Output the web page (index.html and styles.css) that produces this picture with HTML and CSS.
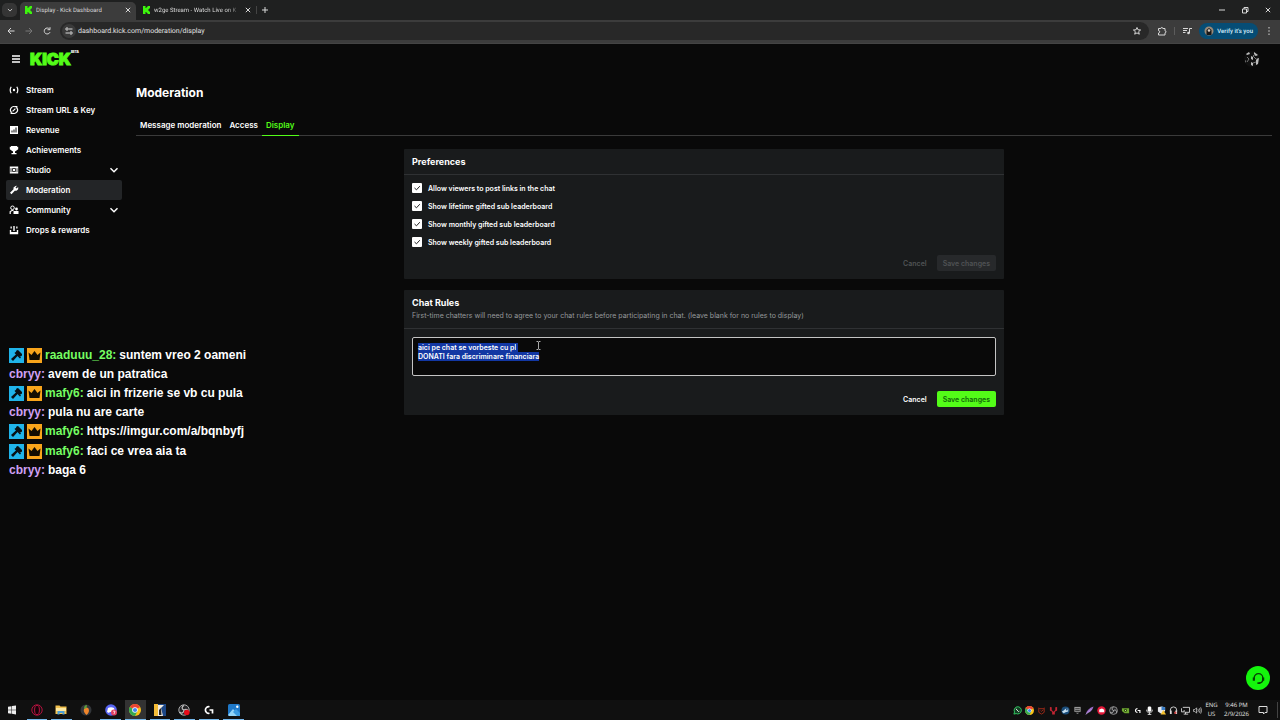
FILE: index.html
```html
<!DOCTYPE html>
<html lang="en">
<head>
    <meta charset="UTF-8">
    <meta name="viewport" content="width=device-width, initial-scale=1.0">
    <title>Display - Kick Dashboard</title>
    <link rel="stylesheet" href="styles.css">
</head>
<body>
    <svg class="sprite" aria-hidden="true">
        <symbol id="close" viewBox="0 0 8 8"><path d="M1.8 1.8l4.400 4.400m0-4.400l-4.400 4.400" fill="none" stroke="currentColor"/></symbol>
        <symbol id="chevron" viewBox="0 0 10 10"><path d="M1.500 3.2L5 6.8l3.500-3.600" fill="none" stroke="currentColor" stroke-width="1.400"/></symbol>
        <symbol id="kick-icon" viewBox="0 0 8 8"><path d="M1 0h2.500v2h1V1h1V0H8v2.500H7v1H6v1h1v1h1V8H5.500V7h-1V6h-1v2H1z" fill="#3df50d"/></symbol>
        <symbol id="hammer" viewBox="0 0 15 15"><path d="M0 0h15v15H0z" fill="#20b4ea"/><path d="M7.500 2.500l1.500-.5 4 4v1.500l-1.500 1-1.500-.5-1-.5L4 13 2 11l5.500-5-.8-1.500z" fill="#081014"/><path d="M6 4.500l5.500 5.500" stroke="#081014" stroke-width="1.500"/></symbol>
        <symbol id="crown" viewBox="0 0 15 15"><path d="M0 0h15v15H0z" fill="#f9a51b"/><path d="M1.500 4.500l3 2.500 3-4 3 4 3-2.500-1 7.500h-10z" fill="#130d02"/></symbol>
        <symbol id="chrome" viewBox="0 0 12 12"><circle cx="6" cy="6" r="6" fill="#fbc116"/><path d="M6 6L.8 3A6 6 0 0 1 11.200 3z" fill="#ea4335"/><path d="M6 6L.8 3A6 6 0 0 0 6 12l2.500-5z" fill="#34a853"/><circle cx="6" cy="6" r="2.800" fill="#fff"/><circle cx="6" cy="6" r="2.100" fill="#4285f4"/></symbol>
        <symbol id="obs" viewBox="0 0 12 12"><circle cx="6" cy="6" r="5.200" fill="#242426" stroke="#aaa"/><path d="M6 6C3 5 4 2 6 1.500M6 6c3-2 5 1 4 3M6 6c0 3-3 4-4.500 2" fill="none" stroke="#bbb" stroke-width="1.300"/></symbol>
    </svg>

    <div class="tab-strip">
        <button class="tab-search" aria-label="Search tabs"><svg class="icon-xs"><use href="#chevron"/></svg></button>
        <div class="browser-tab active">
            <svg class="favicon"><use href="#kick-icon"/></svg>
            <span class="tab-title">Display - Kick Dashboard</span>
            <button aria-label="Close tab"><svg class="icon-s"><use href="#close"/></svg></button>
        </div>
        <div class="browser-tab">
            <svg class="favicon"><use href="#kick-icon"/></svg>
            <span class="tab-title faded">w2ge Stream - Watch Live on K</span>
            <button aria-label="Close tab"><svg class="icon-s"><use href="#close"/></svg></button>
        </div>
        <button class="new-tab" aria-label="New tab"><svg class="icon-s" viewBox="0 0 8 8"><path d="M4 1v6M1 4h6" stroke="currentColor"/></svg></button>
        <div class="window-buttons">
            <button aria-label="Minimize"><svg class="icon-s" viewBox="0 0 8 8"><path d="M1 4h6" stroke="currentColor"/></svg></button>
            <button aria-label="Restore"><svg class="icon-s" viewBox="0 0 8 8"><path d="M1.500 3h4v4h-4zM3 3V1.500h4V5.500H5.500" fill="none" stroke="currentColor"/></svg></button>
            <button aria-label="Close"><svg class="icon-s"><use href="#close"/></svg></button>
        </div>
    </div>

    <div class="toolbar">
        <button aria-label="Back"><svg class="icon-m" viewBox="0 0 10 10"><path d="M8.500 5H2m3-3L2 5l3 3" fill="none" stroke="currentColor"/></svg></button>
        <button class="dim" aria-label="Forward"><svg class="icon-m" viewBox="0 0 10 10"><path d="M1.500 5H8M5 2l3 3-3 3" fill="none" stroke="currentColor"/></svg></button>
        <button aria-label="Reload"><svg class="icon-m" viewBox="0 0 10 10"><path d="M8 6.200A3 3 0 1 1 7.500 3M8 1.200v2.500H5.500" fill="none" stroke="currentColor"/></svg></button>
        <div class="address">
            <span class="site-info"><svg class="icon-s" viewBox="0 0 8 8"><path d="M4 2h3.500M.5 6H4" stroke="currentColor"/><circle cx="2" cy="2" r="1.200" fill="none" stroke="currentColor"/><circle cx="6" cy="6" r="1.200" fill="none" stroke="currentColor"/></svg></span>
            <input type="text" aria-label="Address" value="dashboard.kick.com/moderation/display">
            <button aria-label="Bookmark"><svg class="icon-m" viewBox="0 0 10 10"><path d="M5 1.500l1 2.300 2.600.2-2 1.700.7 2.500L5 6.900 2.700 8.200l.7-2.500L1.400 4 4 3.800z" fill="none" stroke="currentColor"/></svg></button>
        </div>
        <div class="toolbar-end">
            <button aria-label="Extensions"><svg class="icon-m" viewBox="0 0 10 10"><path d="M1.500 2.500h2.300a1 1 0 0 1 2 0H8v2.300a1 1 0 0 1 0 2V9H1.500V7a1.200 1.200 0 0 0 0-2.400z" fill="none" stroke="currentColor"/></svg></button>
            <span class="bar"></span>
            <button aria-label="Media"><svg class="icon-m" viewBox="0 0 10 10"><path d="M1 2.500h5M1 4.500h4M1 6.500h2.500M7.500 7V2.500H10" fill="none" stroke="currentColor"/><circle cx="6.500" cy="7" r="1.300" fill="currentColor"/></svg></button>
            <button class="verify"><svg class="icon-m" viewBox="0 0 10 10"><circle cx="5" cy="5" r="4.500" fill="#9a8a78"/><path d="M2.500 9V4L5 2l2.500 2v5z" fill="#181818"/><circle cx="5" cy="4.500" r="1.300" fill="#d9d0c7"/></svg>Verify it's you</button>
            <button aria-label="Menu"><svg class="icon-m" viewBox="0 0 10 10"><path d="M4.500 1h1v1.500h-1zM4.500 4.300h1v1.500h-1zM4.500 7.600h1v1.500h-1z" fill="currentColor"/></svg></button>
        </div>
    </div>

    <div class="page">
        <header class="site-header">
            <button aria-label="Toggle menu"><svg class="icon-s" viewBox="0 0 8 8"><path d="M0 1h8M0 4h8M0 7h8" stroke="currentColor" stroke-width="1.300"/></svg></button>
            <a href="#home" class="logo">KICK<sup>BETA</sup></a>
            <svg class="avatar" viewBox="0 0 16 16"><circle cx="8" cy="8" r="8" fill="#101010"/><path d="M2 3l3-2 1 2-3 1zM10 1l4 3-2 1-2-1zM7 5l2 1v3l-2-1zM12 8l3-1-1 6-2 1zM7 11l2 1v3l-2-1zM1 9l1 1v2z" fill="#bcbcbc"/><path d="M3 6l2 2-2 3M11 3l-2 2 4 4M9 12l3-1" fill="none" stroke="#777"/></svg>
        </header>

        <div class="layout">
            <nav class="sidebar">
                <a href="#stream"><svg class="nav-icon" viewBox="0 0 10 10"><circle cx="5" cy="5" r="1.200" fill="currentColor"/><path d="M2.200 1.800Q.2 5 2.200 8.200M7.800 1.800q2 3.200 0 6.400" fill="none" stroke="currentColor" stroke-width="1.200"/></svg>Stream</a>
                <a href="#key"><svg class="nav-icon" viewBox="0 0 10 10"><path d="M6 1.700A3.500 3.500 0 0 0 2.200 7.200M4 8.300A3.500 3.500 0 0 0 7.800 2.800M3.600 6.400l2.800-2.800M6 1.700h1.800v1.800M4 8.300H2.200V6.500" fill="none" stroke="currentColor" stroke-width="1.200"/></svg>Stream URL &amp; Key</a>
                <a href="#revenue"><svg class="nav-icon" viewBox="0 0 10 10"><path d="M1 1h8v8H1z" fill="currentColor"/><path d="M3 7.500V5.500M5 7.500v-3M7 7.500v-5" stroke="#0b0b0b"/></svg>Revenue</a>
                <a href="#achievements"><svg class="nav-icon" viewBox="0 0 10 10"><path d="M2 1h6v.8h1.200v2.400L7.500 5.500 6 6.500V8h1.500v1.200h-5V8H4V6.500L2.500 5.500.8 4.200V1.800H2z" fill="currentColor"/></svg>Achievements</a>
                <a href="#studio"><svg class="nav-icon" viewBox="0 0 10 10"><path d="M.8 1.500h8.400v7H.8z" fill="currentColor"/><path d="M2 3.200v4M8 3.200v4M3.500 3.500h3v3h-3z" fill="none" stroke="#0b0b0b" stroke-width=".8"/></svg>Studio<svg class="expand"><use href="#chevron"/></svg></a>
                <a href="#moderation" class="active"><svg class="nav-icon" viewBox="0 0 10 10"><path d="M6.500 1L8 .8 6.500 2.500 7.500 3.500 9.200 2v2.200L7.500 5.800H5.800L2.500 9.200 1 7.800l3.500-3.500V2.600z" fill="currentColor"/></svg>Moderation</a>
                <a href="#community"><svg class="nav-icon" viewBox="0 0 10 10"><circle cx="3.500" cy="2.800" r="1.800" fill="none" stroke="currentColor"/><path d="M1.200 9V6.500L3 5.500h1.500" fill="none" stroke="currentColor" stroke-width="1.200"/><circle cx="7.500" cy="4" r="1.400" fill="currentColor"/><path d="M4.500 6h5v3h-5z" fill="currentColor"/></svg>Community<svg class="expand"><use href="#chevron"/></svg></a>
                <a href="#drops"><svg class="nav-icon" viewBox="0 0 10 10"><path d="M.8 5h1.400v2h5.600V5h1.400v4.200H.8zM4.300 1h1.400v5H4.300zM1.500 1.500h1.300v2H1.500zM7.200 1.500h1.300v2H7.200z" fill="currentColor"/></svg>Drops &amp; rewards</a>
            </nav>

            <main class="content">
                <h1>Moderation</h1>
                <div class="tabs">
                    <a href="#message">Message moderation</a>
                    <a href="#access">Access</a>
                    <a href="#display" class="active">Display</a>
                </div>

                <section class="card">
                    <div class="card-header">
                        <h2>Preferences</h2>
                    </div>
                    <form class="card-body">
                        <label><input type="checkbox" checked>Allow viewers to post links in the chat</label>
                        <label><input type="checkbox" checked>Show lifetime gifted sub leaderboard</label>
                        <label><input type="checkbox" checked>Show monthly gifted sub leaderboard</label>
                        <label><input type="checkbox" checked>Show weekly gifted sub leaderboard</label>
                        <div class="actions">
                            <button type="button" class="btn" disabled>Cancel</button>
                            <button type="submit" class="btn save" disabled>Save changes</button>
                        </div>
                    </form>
                </section>

                <section class="card">
                    <div class="card-header">
                        <h2>Chat Rules</h2>
                        <p>First-time chatters will need to agree to your chat rules before participating in chat. (leave blank for no rules to display)</p>
                    </div>
                    <form class="card-body rules-body">
                        <textarea id="rules" aria-label="Chat Rules" spellcheck="false">aici pe chat se vorbeste cu pl
DONATI fara discriminare financiara</textarea>
                        <svg class="cursor" viewBox="0 0 5 9"><path d="M.5.5h1.500l.5.500.5-.500h1.500M2.500 1v7M.5 8.500h1.500l.5-.500.5.500h1.500" fill="none" stroke="#d0d0d0" stroke-width=".8"/></svg>
                        <div class="actions">
                            <button type="button" class="btn">Cancel</button>
                            <button type="submit" class="btn save">Save changes</button>
                        </div>
                    </form>
                </section>
            </main>
        </div>

        <div class="chat">
            <p class="badged"><svg><use href="#hammer"/></svg><svg><use href="#crown"/></svg><b class="green">raaduuu_28:</b> suntem vreo 2 oameni</p>
            <p><b class="purple">cbryy:</b> avem de un patratica</p>
            <p class="badged"><svg><use href="#hammer"/></svg><svg><use href="#crown"/></svg><b class="green">mafy6:</b> aici in frizerie se vb cu pula</p>
            <p><b class="purple">cbryy:</b> pula nu are carte</p>
            <p class="badged"><svg><use href="#hammer"/></svg><svg><use href="#crown"/></svg><b class="green">mafy6:</b> https://imgur.com/a/bqnbyfj</p>
            <p class="badged"><svg><use href="#hammer"/></svg><svg><use href="#crown"/></svg><b class="green">mafy6:</b> faci ce vrea aia ta</p>
            <p><b class="purple">cbryy:</b> baga 6</p>
        </div>

        <button class="help" aria-label="Support"><svg viewBox="0 0 12 12"><path d="M2 7V5.500a4 4 0 0 1 8 0V7.500Q9.500 10 6.500 10.300" fill="none" stroke="#073d06" stroke-width="1.200"/><path d="M.7 5h2v3h-2zM9.300 5h2v3h-2zM5 9.500h2.500V11H5z" fill="#073d06"/></svg></button>
    </div>

    <footer class="taskbar">
        <div class="apps">
            <button aria-label="Start"><svg viewBox="0 0 12 12"><path d="M2 2.700l3.500-.5v3.500H2zM6 2.100l4-.6v4.200H6zM2 6.200h3.500v3.500L2 9.200zM6 6.200h4v4.200l-4-.6z" fill="#eee"/></svg></button>
            <button class="open" aria-label="Opera GX"><svg viewBox="0 0 12 12"><circle cx="6" cy="6" r="5.200" fill="none" stroke="#b5123f"/><ellipse cx="6" cy="6" rx="2.400" ry="4.600" fill="#160309" stroke="#b5123f"/></svg></button>
            <button class="open" aria-label="File Explorer"><svg viewBox="0 0 12 12"><path d="M.5 1.500h4l1 1h6V10H.5z" fill="#f2c14e"/><path d="M1 4h10v3H1z" fill="#fde9a2"/><path d="M2.500 10.500V7h7v3.500h-2V9h-3v1.500z" fill="#4b9fd8"/></svg></button>
            <button aria-label="FL Studio"><svg viewBox="0 0 12 12"><circle cx="6" cy="6" r="5.500" fill="#33363a"/><path d="M4 5Q6 2.500 8.500 4.500 10 8 6.500 11 3 8 4 5z" fill="#f1862b"/><path d="M4 5Q4 1 7 1L6.500 4z" fill="#5fa13a"/></svg></button>
            <button class="open" aria-label="Discord"><svg viewBox="0 0 12 12"><circle cx="6" cy="6" r="5.800" fill="#5865f2"/><path d="M3 4q3-1.500 6 0l1 4-2 1-.8-1H4.800L4 9 2 8z" fill="#fff"/><circle cx="9" cy="8.500" r="3" fill="#e04060"/><path d="M8 7.200h2L9 10" fill="none" stroke="#fff" stroke-width=".7"/></svg></button>
            <button class="open current" aria-label="Chrome"><svg><use href="#chrome"/></svg></button>
            <button class="open" aria-label="Game"><svg viewBox="0 0 12 12"><path d="M0 0h12v12H0z" fill="#1c4787"/><path d="M0 0h4v12H0z" fill="#f5bd38"/><path d="M4 1h6L7 4l2 8H4z" fill="#f5eee3"/><path d="M5 6l2-2 .5 7H5z" fill="#272524"/></svg></button>
            <button class="open" aria-label="OBS Studio"><svg viewBox="0 0 12 12"><use href="#obs"/><circle cx="8.800" cy="8.500" r="2.800" fill="#e80a18"/></svg></button>
            <button class="open" aria-label="Logitech G HUB"><svg viewBox="0 0 12 12"><path d="M6.500 2.800A3.300 3.300 0 1 0 6.500 9.200M6.500 6h3v3.500" fill="none" stroke="#fff" stroke-width="1.700"/></svg></button>
            <button class="open" aria-label="Photos"><svg viewBox="0 0 12 12"><rect width="12" height="12" rx="1.500" fill="#1f78c8"/><path d="M0 11l5-6 6.500 7H1z" fill="#93d4f7"/><path d="M5 8l3-3 4 4v3H9z" fill="#3b9ce2"/><circle cx="9.300" cy="2.800" r="1.200" fill="#fff"/></svg></button>
        </div>

        <div class="tray">
            <svg viewBox="0 0 10 10"><path d="M1 9l.7-2.400a4 4 0 1 1 1.800 1.800z" fill="#123d22" stroke="#35d366"/><path d="M3.400 3l1 1.500 1.800 1.700L7 5.800" fill="none" stroke="#fff"/></svg>
            <svg><use href="#chrome"/></svg>
            <svg viewBox="0 0 10 10"><path d="M2 2l1 1h4l1-1v5L5 9 2 7z" fill="none" stroke="#a62b1a"/><path d="M4 5l1 1 2-2" fill="none" stroke="#a62b1a"/></svg>
            <svg viewBox="0 0 10 10"><path d="M1 1l2 .5v3l2 2 2-2v-3L9 1v4L6.500 6.500v3h-3v-3L1 5z" fill="#c32532"/></svg>
            <svg viewBox="0 0 10 10"><circle cx="5" cy="5" r="4.500" fill="#1a4c79"/><path d="M1 6l2-1 2-2h3v3L5 7 3 8z" fill="#c3dcee"/><circle cx="6.500" cy="4" r="1" fill="#1a4c79"/></svg>
            <svg viewBox="0 0 10 10"><path d="M1.500 1h7v5.500h-7z" fill="#999"/><path d="M2.500 3h5M2.500 5h5" stroke="#333"/><path d="M3 7.500h4L5 9z" fill="#888"/></svg>
            <svg viewBox="0 0 10 10"><path d="M.8 9.500Q2 3 9.500.5 8 6 3.500 7.500z" fill="#9a6bc8"/><path d="M1 9.500l6-6" stroke="#d5c1ea" stroke-width=".6"/></svg>
            <svg viewBox="0 0 10 10"><circle cx="5" cy="5" r="4.700" fill="#e41839"/><path d="M2.500 4l3-1.300 2.500 1.500V7H2.500z" fill="#fff"/></svg>
            <svg><use href="#obs"/></svg>
            <svg viewBox="0 0 10 10"><path d="M1 2.500h8v5.500H4L1 5.500z" fill="#6fa832"/><circle cx="5" cy="5" r="1.600" fill="#203a08"/><circle cx="5" cy="5" r=".7" fill="#b9dc83"/></svg>
            <svg viewBox="0 0 10 10"><path d="M5 2.800A2.200 2.200 0 1 0 5 7.200M5.200 5h2.500v2.700" fill="none" stroke="#fff" stroke-width="1.300"/></svg>
            <svg viewBox="0 0 10 10"><rect x="3" y=".5" width="4" height="6" rx="1.500" fill="#fff"/><path d="M2 4v2l2 1.500h2L8 6V4M5 7v2.500M3 9.500h4" fill="none" stroke="#ddd"/></svg>
            <svg viewBox="0 0 10 10"><path d="M1 1.500L5 .5l4 1v4L5 9 1 6z" fill="#e7e9ed"/><path d="M5 .5l4 1v3H5z" fill="#3b7ec6"/><path d="M7 4.500l3 5H4z" fill="#f7c331"/></svg>
            <svg viewBox="0 0 10 10"><path d="M1.500 6V4.500a3.500 3.500 0 0 1 7 0V6" fill="none" stroke="#ddd"/><path d="M1 5h2v4H1zM7 5h2v4H7z" fill="#ddd"/><circle cx="7" cy="7.500" r="1.300" fill="#d34747"/></svg>
            <svg viewBox="0 0 10 10"><path d="M2 1.500h7.500V7H4M.5 2.500v4h3v-2M5 7v2M3 9h5" fill="none" stroke="#ddd"/></svg>
            <svg viewBox="0 0 10 10"><path d="M.5 4h1.500l2-2v6l-2-2H.5zM5.500 3.500q1 1.500 0 3M7 2.500q1.600 2.500 0 5M8.500 1.500q2 3.500 0 7" fill="none" stroke="#ddd" stroke-width=".8"/></svg>
        </div>
        <div class="lang">ENG<br>US</div>
        <div class="clock">9:46 PM<br>2/9/2026</div>
        <button class="notifications" aria-label="Notifications"><svg viewBox="0 0 10 10"><path d="M1 1.500h8v6H7L5.500 9V7.500H1z" fill="none" stroke="#ddd"/></svg></button>
    </footer>

    <script>
        var rules = document.getElementById('rules');
        rules.focus();
        rules.select();
    </script>
</body>
</html>
```
FILE: styles.css
```css
* {
    box-sizing: border-box;
}
body {
    margin: 0;
    height: 100vh;
    display: flex;
    flex-direction: column;
    overflow: hidden;
    background-color: #090909;
    color: #fff;
    font-family: Inter, sans-serif;
    font-size: 8px;
}
button {
    display: flex;
    align-items: center;
    justify-content: center;
    margin: 0;
    padding: 0;
    border: none;
    background: none;
    color: inherit;
    font: inherit;
}
a {
    color: inherit;
    text-decoration: none;
}
svg {
    flex-shrink: 0;
}
.sprite {
    display: none;
}
.icon-xs {
    width: 6px;
    height: 6px;
}
.icon-s, .favicon {
    width: 8px;
    height: 8px;
}
.icon-m {
    width: 10px;
    height: 10px;
}

/* browser window */
.tab-strip, .toolbar {
    font-family: Roboto, sans-serif;
    text-rendering: geometricPrecision;
}
.tab-strip {
    display: flex;
    align-items: center;
    height: 20px;
    flex-shrink: 0;
    background-color: #1f2020;
    font-size: 6px;
    color: #d8d8d8;
}
.tab-search {
    width: 15px;
    height: 14px;
    margin: 0 3px 0 2px;
    border-radius: 5px;
    background-color: #353535;
}
.browser-tab {
    display: flex;
    align-items: center;
    gap: 4px;
    width: 116px;
    height: 18px;
    align-self: flex-end;
    padding: 0 4px 2px;
    border-radius: 5px 5px 0 0;
}
.browser-tab.active {
    background-color: #3c3c3c;
}
.browser-tab + .browser-tab {
    width: 120px;
    padding-left: 6px;
}
.tab-title {
    flex: 1;
    overflow: hidden;
    white-space: nowrap;
}
.faded {
    -webkit-mask-image: linear-gradient(to right, #000 85%, transparent);
    mask-image: linear-gradient(to right, #000 85%, transparent);
}
.new-tab {
    padding-left: 4px;
    border-left: 1px solid #444;
}
.window-buttons {
    display: flex;
    gap: 15px;
    margin-left: auto;
    padding-right: 8px;
}
.toolbar {
    display: flex;
    align-items: center;
    gap: 8px;
    height: 24px;
    flex-shrink: 0;
    padding: 0 6px 1px;
    background-color: #3c3c3c;
    border-bottom: 1px solid #444;
    color: #d8d8d8;
    font-size: 7px;
}
.toolbar-end {
    display: flex;
    align-items: center;
    gap: 7px;
}
.dim {
    color: #777;
}
.address {
    flex: 1;
    display: flex;
    align-items: center;
    height: 18px;
    padding: 0 7px 0 2px;
    border-radius: 9px;
    background-color: #282828;
}
.address input {
    flex: 1;
    padding: 0 2px;
    border: none;
    background: none;
    color: #e2e2e2;
    font: inherit;
    text-rendering: inherit;
}
.site-info {
    display: flex;
    padding: 3px;
    border-radius: 50%;
    background-color: #3a3a3a;
}
.bar {
    width: 1px;
    height: 8px;
    background-color: #5c5c5c;
}
.verify {
    gap: 3px;
    height: 16px;
    padding: 0 5px;
    border-radius: 8px;
    background-color: #064d75;
    color: #d5efff;
    font-size: 6px;
    font-weight: 500;
    text-rendering: inherit;
}
.toolbar-end button:last-child {
    margin-left: -1px;
}

/* dashboard */
.page {
    flex: 1;
    min-height: 0;
    position: relative;
    background-color: #090909;
}
.site-header {
    display: flex;
    align-items: center;
    height: 30px;
    padding: 0 20px 0 12px;
}
.logo {
    margin-left: 10px;
    color: #53fc18;
    font-size: 16px;
    font-weight: 900;
    line-height: 16px;
    -webkit-text-stroke: 1px #53fc18;
}
.logo sup {
    color: #fff;
    font-size: 3px;
    line-height: 3px;
    vertical-align: top;
    -webkit-text-stroke: 0;
}
.avatar {
    width: 16px;
    height: 16px;
    margin-left: auto;
}
.layout {
    display: flex;
}
.sidebar {
    width: 128px;
    padding: 6px;
}
.sidebar a {
    display: flex;
    align-items: center;
    gap: 7px;
    height: 20px;
    padding: 0 3px;
    border-radius: 2px;
    font-weight: 600;
}
.sidebar .active {
    background-color: #232527;
}
.nav-icon {
    width: 10px;
    height: 10px;
}
.expand {
    width: 10px;
    height: 10px;
    margin-left: auto;
}
.content {
    flex: 1;
    padding: 11px 8px;
}
h1 {
    margin: 0 0 16px;
    font-size: 12px;
    line-height: 16px;
    font-weight: 700;
}
.tabs {
    display: flex;
    margin-bottom: 13px;
    border-bottom: 1px solid #3a3a3a;
    font-weight: 600;
}
.tabs a {
    height: 19px;
    padding: 0 4px;
    line-height: 16px;
    margin-bottom: -1px;
}
.tabs .active {
    color: #53fc18;
    border-bottom: 1px solid #53fc18;
}
.card {
    max-width: 600px;
    margin: 0 auto 11px;
    background-color: #191b1c;
    border-radius: 1px;
}
.card-header {
    padding: 6px 8px;
    border-bottom: 1px solid #2f3133;
}
h2 {
    margin: 0;
    font-size: 9px;
    line-height: 13px;
    font-weight: 700;
}
.card-header p {
    margin: 2px 0;
    color: #96999b;
    font-size: 7px;
    line-height: 9px;
}
.card-body {
    display: flex;
    flex-direction: column;
    gap: 8px;
    padding: 8px;
}
.card-body label {
    display: flex;
    align-items: center;
    gap: 6px;
    height: 10px;
    font-size: 7px;
    font-weight: 600;
}
.card-body input {
    width: 10px;
    height: 10px;
    margin: 0;
    appearance: none;
    background-color: #fff;
    border-radius: 1px;
}
.card-body input:checked {
    background-image: url("data:image/svg+xml,%3Csvg xmlns='http://www.w3.org/2000/svg' viewBox='0 0 10 10'%3E%3Cpath d='M2.500 5l2 1.800 3.300-3.600' fill='none' stroke='%23222'/%3E%3C/svg%3E");
}
.actions {
    display: flex;
    justify-content: flex-end;
    gap: 4px;
}
.btn {
    height: 16px;
    padding: 0 6px;
    border-radius: 2px;
    font-size: 7px;
    font-weight: 600;
}
.btn:disabled {
    color: #505355;
}
.save {
    background-color: #53fc18;
    color: #11660a;
}
.save:disabled {
    background-color: #27292b;
}
.rules-body {
    position: relative;
    gap: 15px;
}
textarea {
    display: block;
    width: 100%;
    height: 39px;
    padding: 5px;
    border: 1px solid #c4c4c4;
    border-radius: 2px;
    outline: none;
    resize: none;
    background-color: #090909;
    color: #fff;
    font: 600 7px/9px Inter, sans-serif;
}
textarea::selection {
    background-color: #1237a3;
    color: #fff;
}
.cursor {
    position: absolute;
    top: 12px;
    left: 132px;
    width: 5px;
    height: 9px;
}

/* stream chat overlay */
.chat {
    position: absolute;
    top: 301px;
    left: 9px;
    font-family: "Liberation Sans", Arial, sans-serif;
    font-size: 12px;
    font-weight: bold;
}
.chat p {
    display: flex;
    align-items: center;
    gap: 3px;
    height: 18px;
    margin: 0;
}
.chat .badged {
    height: 20px;
}
.chat svg {
    width: 15px;
    height: 15px;
}
.green {
    color: #75fd62;
}
.purple {
    color: #cfa0f5;
}
.help {
    position: absolute;
    right: 10px;
    bottom: 10px;
    width: 24px;
    height: 24px;
    border-radius: 50%;
    background-color: #14f50c;
}
.help svg {
    width: 13px;
    height: 13px;
}

/* windows taskbar */
.taskbar {
    display: flex;
    align-items: center;
    height: 20px;
    flex-shrink: 0;
    background-color: #101010;
    color: #e8e8e8;
    font-family: "Open Sans", sans-serif;
    font-size: 6px;
    line-height: 9px;
    text-align: center;
    text-rendering: geometricPrecision;
}
.apps {
    display: flex;
    gap: 4px;
    width: 246px;
    height: 100%;
    padding: 0 2px;
}
.apps button {
    flex: 1;
    border-bottom: 1px solid transparent;
}
.apps .open {
    border-color: #76b9ed;
}
.apps .current {
    background-color: #333;
}
.apps svg {
    width: 12px;
    height: 12px;
}
.tray {
    display: flex;
    gap: 3px;
    margin-left: auto;
}
.tray svg {
    width: 9px;
    height: 9px;
}
.lang {
    width: 19px;
}
.clock {
    width: 31px;
}
.notifications {
    width: 26px;
    height: 16px;
    padding-right: 3px;
    border-right: 1px solid #444;
    margin-right: 2px;
}
.notifications svg {
    width: 10px;
    height: 10px;
}
```
